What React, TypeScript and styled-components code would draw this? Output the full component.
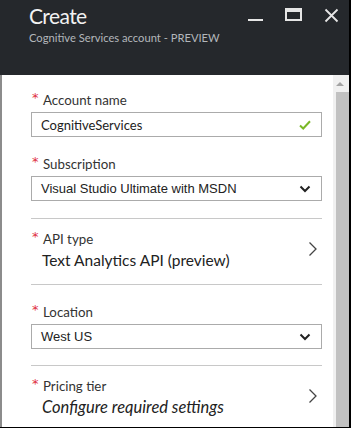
import { createGlobalStyle, styled } from 'styled-components';

const GlobalStyle = createGlobalStyle`
  html, body {
    margin: 0;
    padding: 0;
    background: #000;
  }
  body {
    font-family: 'Lato', 'Open Sans', sans-serif;
  }
`;

function Chevron() {
  return (
    <svg width="10" height="16" viewBox="0 0 10 16">
      <path d="M1.5 1.5 L8 8 L1.5 14.5" fill="none" stroke="#444" strokeWidth="1.3" />
    </svg>
  );
}

function DropArrow() {
  return (
    <svg width="12" height="8" viewBox="0 0 12 8">
      <path d="M1.5 1.5 L6 6 L10.5 1.5" fill="none" stroke="#222" strokeWidth="2" />
    </svg>
  );
}

function Check() {
  return (
    <svg width="12" height="10" viewBox="0 0 12 10">
      <path d="M1 5.5 L4.2 8.5 L11 1.2" fill="none" stroke="#7ab826" strokeWidth="2" />
    </svg>
  );
}

export default function App() {
  return (
    <St.Window>
      <GlobalStyle />
      <St.Header>
        <St.Titles>
          <St.Title>Create</St.Title>
          <St.Subtitle>Cognitive Services account - PREVIEW</St.Subtitle>
        </St.Titles>
        <St.Controls>
          <svg width="15" height="14" viewBox="0 0 15 14">
            <rect x="0" y="11" width="15" height="2" fill="#e6e6e6" />
          </svg>
          <svg width="17" height="13" viewBox="0 0 17 13">
            <rect x="1" y="1" width="15" height="11" fill="none" stroke="#e6e6e6" strokeWidth="2" />
            <rect x="1" y="1" width="15" height="3" fill="#e6e6e6" />
          </svg>
          <svg width="15" height="15" viewBox="0 0 15 15">
            <path d="M1.5 1.5 L13.5 13.5 M13.5 1.5 L1.5 13.5" stroke="#e6e6e6" strokeWidth="1.8" />
          </svg>
        </St.Controls>
      </St.Header>
      <St.Body>
        <St.Content>
          <St.Field $top={14}>
            <St.Label>Account name</St.Label>
            <St.Box>
              <St.InputText>CognitiveServices</St.InputText>
              <Check />
            </St.Box>
          </St.Field>
          <St.Field $top={16} $bottom={17}>
            <St.Label>Subscription</St.Label>
            <St.Box>
              <St.SelectText>Visual Studio Ultimate with MSDN</St.SelectText>
              <DropArrow />
            </St.Box>
          </St.Field>
          <St.Divider />
          <St.LinkRow>
            <St.LinkText>
              <St.Label>API type</St.Label>
              <St.Value>Text Analytics API (preview)</St.Value>
            </St.LinkText>
            <Chevron />
          </St.LinkRow>
          <St.Divider />
          <St.Field $top={16} $bottom={16}>
            <St.Label>Location</St.Label>
            <St.Box>
              <St.SelectText>West US</St.SelectText>
              <DropArrow />
            </St.Box>
          </St.Field>
          <St.Divider />
          <St.LinkRow>
            <St.LinkText>
              <St.Label>Pricing tier</St.Label>
              <St.Value $italic>Configure required settings</St.Value>
            </St.LinkText>
            <Chevron />
          </St.LinkRow>
        </St.Content>
        <St.Scrollbar>
          <St.ArrowUp />
          <St.Thumb />
        </St.Scrollbar>
      </St.Body>
    </St.Window>
  );
}

const St = {
  Window: styled.div`
    width: 349px;
    height: 427px;
    display: flex;
    flex-direction: column;
    background: #fff;
    overflow: hidden;
  `,

  Header: styled.div`
    height: 75px;
    flex-shrink: 0;
    background: #25282c;
    display: flex;
    justify-content: space-between;
    align-items: flex-start;
    padding: 0 10px 0 29px;
    box-sizing: border-box;
  `,

  Titles: styled.div`
    display: flex;
    flex-direction: column;
  `,

  Title: styled.div`
    font-size: 21px;
    letter-spacing: -0.6px;
    color: #f2f2f2;
    line-height: 30px;
    margin-top: 1px;
  `,

  Subtitle: styled.div`
    font-size: 11.2px;
    color: #b3b7bb;
    line-height: 14px;
  `,

  Controls: styled.div`
    display: flex;
    align-items: flex-start;
    gap: 22px;
    padding-top: 8px;
  `,

  Body: styled.div`
    flex: 1;
    display: flex;
    border-left: 2px solid #8c8c8c;
    min-height: 0;
  `,

  Content: styled.div`
    flex: 1;
    min-height: 0;
    overflow: hidden;
    padding: 0 11px 0 29px;
    display: flex;
    flex-direction: column;
    & > * {
      flex-shrink: 0;
    }
  `,

  Field: styled.div<{ $top?: number; $bottom?: number }>`
    display: flex;
    flex-direction: column;
    padding-top: ${({ $top }) => $top ?? 0}px;
    padding-bottom: ${({ $bottom }) => $bottom ?? 0}px;
  `,

  Label: styled.div`
    font-size: 13.3px;
    color: #333;
    line-height: 22px;
    padding-left: 12px;
    position: relative;
    &::before {
      content: '*';
      position: absolute;
      left: 1px;
      top: -2px;
      color: #e0303f;
      font-size: 13px;
      font-family: 'DejaVu Sans', sans-serif;
    }
  `,

  Box: styled.div`
    margin-top: 1px;
    height: 25px;
    box-sizing: border-box;
    border: 1px solid #ababab;
    display: flex;
    align-items: center;
    justify-content: space-between;
    padding: 0 10px 0 9px;
  `,

  InputText: styled.span`
    font-size: 13px;
    color: #222;
  `,

  SelectText: styled.span`
    font-family: 'Liberation Sans', Arial, sans-serif;
    font-size: 13px;
    color: #222;
  `,

  Divider: styled.div`
    height: 1px;
    background: #c8c8c8;
  `,

  LinkRow: styled.div`
    display: flex;
    align-items: center;
    justify-content: space-between;
    padding: 9px 4px 14px 0;
  `,

  LinkText: styled.div`
    display: flex;
    flex-direction: column;
  `,

  Value: styled.div<{ $italic?: boolean }>`
    font-size: ${({ $italic }) => ($italic ? 16.5 : 15.5)}px;
    color: #222;
    padding-left: 11px;
    line-height: 20px;
    font-style: ${({ $italic }) => ($italic ? 'italic' : 'normal')};
  `,

  Scrollbar: styled.div`
    width: 16px;
    flex-shrink: 0;
    background: #f0f0f0;
    display: flex;
    flex-direction: column;
    align-items: flex-end;
  `,

  ArrowUp: styled.div`
    margin: 7px 3px 0 0;
    width: 0;
    height: 0;
    border-left: 4px solid transparent;
    border-right: 4px solid transparent;
    border-bottom: 4px solid #a3a3a3;
    align-self: center;
  `,

  Thumb: styled.div`
    margin-top: 6px;
    width: 13px;
    flex: 1;
    background: #c1c1c1;
  `,
};
